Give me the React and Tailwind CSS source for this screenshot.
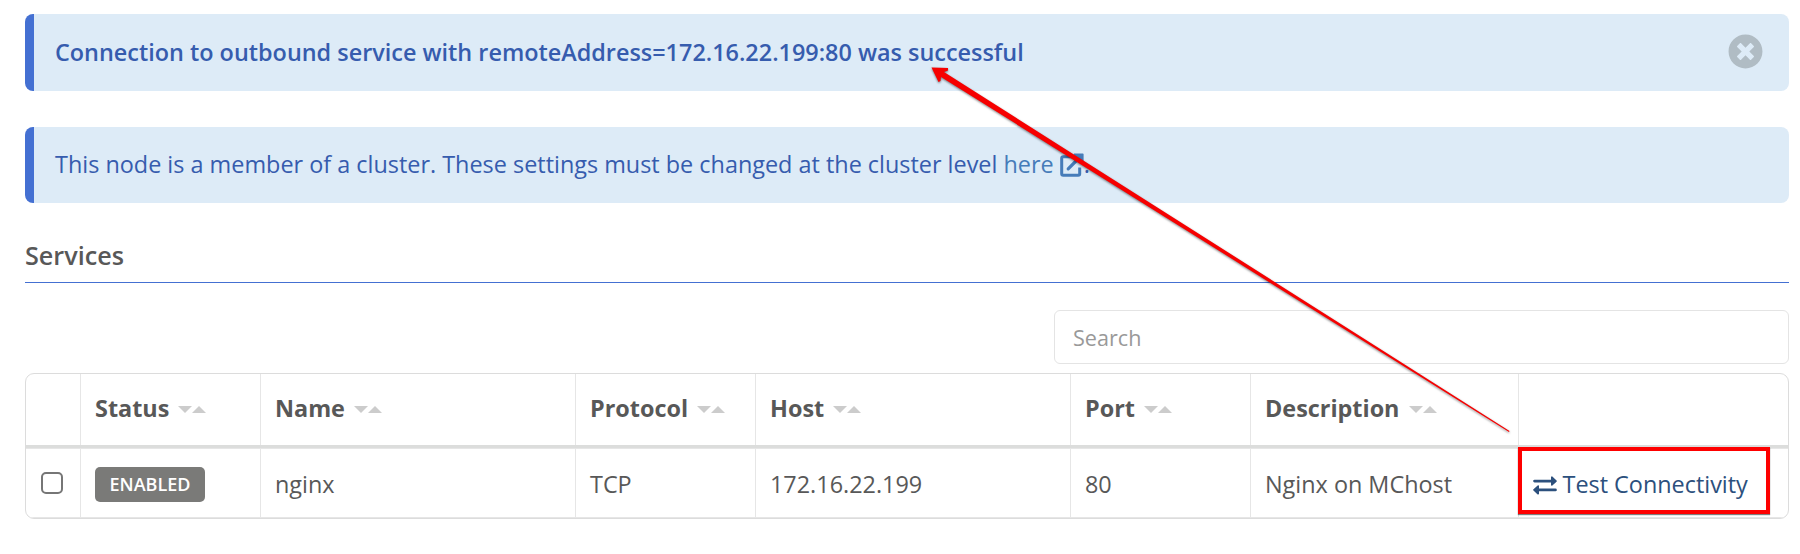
import { FaTimesCircle } from "react-icons/fa";

function Alert({ children, className }) {
  return (
    <div className={"flex items-center rounded-lg border-l-[9px] border-[#4470d2] bg-[#ddebf7] pl-[21px] text-[23.42px] text-[#365cae] " + className}>
      {children}
    </div>
  );
}

function Sort() {
  return (
    <svg className="ml-[9px] h-[7px] w-7 shrink-0" viewBox="0 0 28 7" fill="#cccccc">
      <path d="M0 0h14L7 7z" />
      <path d="M14 7h14L21 0z" />
    </svg>
  );
}

function ExternalLinkIcon() {
  return (
    <svg className="mb-px ml-1.5 h-6 w-6 shrink-0" viewBox="0 0 24 24" fill="none" stroke="#467cb9" strokeWidth="3">
      <path d="M13 3.7H3.2a1.5 1.5 0 0 0-1.5 1.5v15.6a1.5 1.5 0 0 0 1.5 1.5h15a1.5 1.5 0 0 0 1.5-1.5V14.5" />
      <path d="M8.2 15.8L19.5 4.5" strokeWidth="3.2" strokeLinecap="round" />
      <path d="M14.4 1.2h8.4v8.4z" fill="#467cb9" strokeWidth="1.6" strokeLinejoin="round" />
    </svg>
  );
}

function ExchangeIcon() {
  return (
    <svg className="mr-[5.5px] mt-px h-[19px] w-6 shrink-0" viewBox="0 0 24 19" fill="none" stroke="#2c507d">
      <path d="M1.6 5.1H19M22.4 13.9H5" strokeLinecap="round" strokeWidth="2.9" />
      <path d="M18.8 1.2v7.8l4.2-3.9zM5.2 10v7.8L1 13.9z" fill="#2c507d" strokeWidth="1.6" strokeLinejoin="round" />
    </svg>
  );
}

const columns = ["", "Status", "Name", "Protocol", "Host", "Port", "Description", ""];
const grid = "grid grid-cols-[55px_180px_315px_180px_315px_180px_268px_269px]";
const cell = "flex items-center border-r border-[#e6e6e6] pl-3.5 last:border-r-0";

export default function App() {
  return (
    <div className="relative h-[554px] w-[1800px] bg-white pl-[25px] pr-[11px] pt-3.5 font-['Open_Sans',sans-serif] text-[#585858]">
      <Alert className="h-[77px] font-semibold">
        <span className="grow pt-px">Connection to outbound service with remoteAddress=172.16.22.199:80 was successful</span>
        <FaTimesCircle className="mb-0.5 mr-[26px] size-[35px] text-[#b0bcc4]" />
      </Alert>
      <Alert className="mt-9 h-[76px]">
        <span className="pb-px">
          This node is a member of a cluster. These settings must be changed at the cluster level{" "}
          <a className="text-[#467cb9]">here</a>
        </span>
        <ExternalLinkIcon />
        <span className="pb-px">.</span>
      </Alert>
      <h2 className="h-20 border-b border-[#4470d2] pt-[34px] text-[25.2px] font-semibold leading-[36px]">Services</h2>
      <div className="ml-auto mt-[27px] flex h-[54px] w-[735px] items-center rounded-md border border-[#e4e4e4] pl-[18px] pt-0.5 text-[21.6px] text-[#999]">
        Search
      </div>
      <div className="mt-[9px] h-[146px] overflow-hidden rounded-[9px] border border-[#dcdcdc]">
        <div className={grid + " h-[74px] border-b-[3px] border-[#dcdddc] text-[23.4px] font-bold"}>
          {columns.map((name, i) => (
            <div key={i} className={cell}>
              {name && <><span className="pb-0.5">{name}</span><Sort /></>}
            </div>
          ))}
        </div>
        <div className={grid + " h-[70px] border-y border-[#e6e6e6] text-[23.4px]"}>
          <div className={cell + " pt-[3px]"}>
            <span className="mb-1 ml-px size-[22px] rounded-[5px] border-2 border-[#767676]" />
          </div>
          <div className={cell + " pt-[3px]"}>
            <span className="flex h-[35px] w-[110px] items-center justify-center rounded-[5px] bg-[#7a7a78] text-[18px] font-semibold text-white">ENABLED</span>
          </div>
          <div className={cell + " pt-[3px]"}>nginx</div>
          <div className={cell + " pt-[3px]"}>TCP</div>
          <div className={cell + " pt-[3px]"}>172.16.22.199</div>
          <div className={cell + " pt-[3px]"}>80</div>
          <div className={cell + " pt-[3px]"}>Nginx on MChost</div>
          <div className={cell + " pt-[3px] text-[#2c507d]"}>
            <ExchangeIcon />
            Test Connectivity
          </div>
        </div>
      </div>
      <div className="absolute left-[1518px] top-[447px] h-[67px] w-[252px] border-4 border-[#fe0000] shadow-[0_1px_1px_rgba(0,0,0,0.5)]" />
      <svg className="absolute left-0 top-0 h-[554px] w-[1800px] drop-shadow-[0_1px_1px_rgba(0,0,0,0.5)]" viewBox="0 0 1800 554" fill="#f60000">
        <path d="M931.5 67.5L948 68L948 70.5L944 72L1509.5 431L1509 432L941 77L940.5 81L938.5 82z" />
      </svg>
    </div>
  );
}
